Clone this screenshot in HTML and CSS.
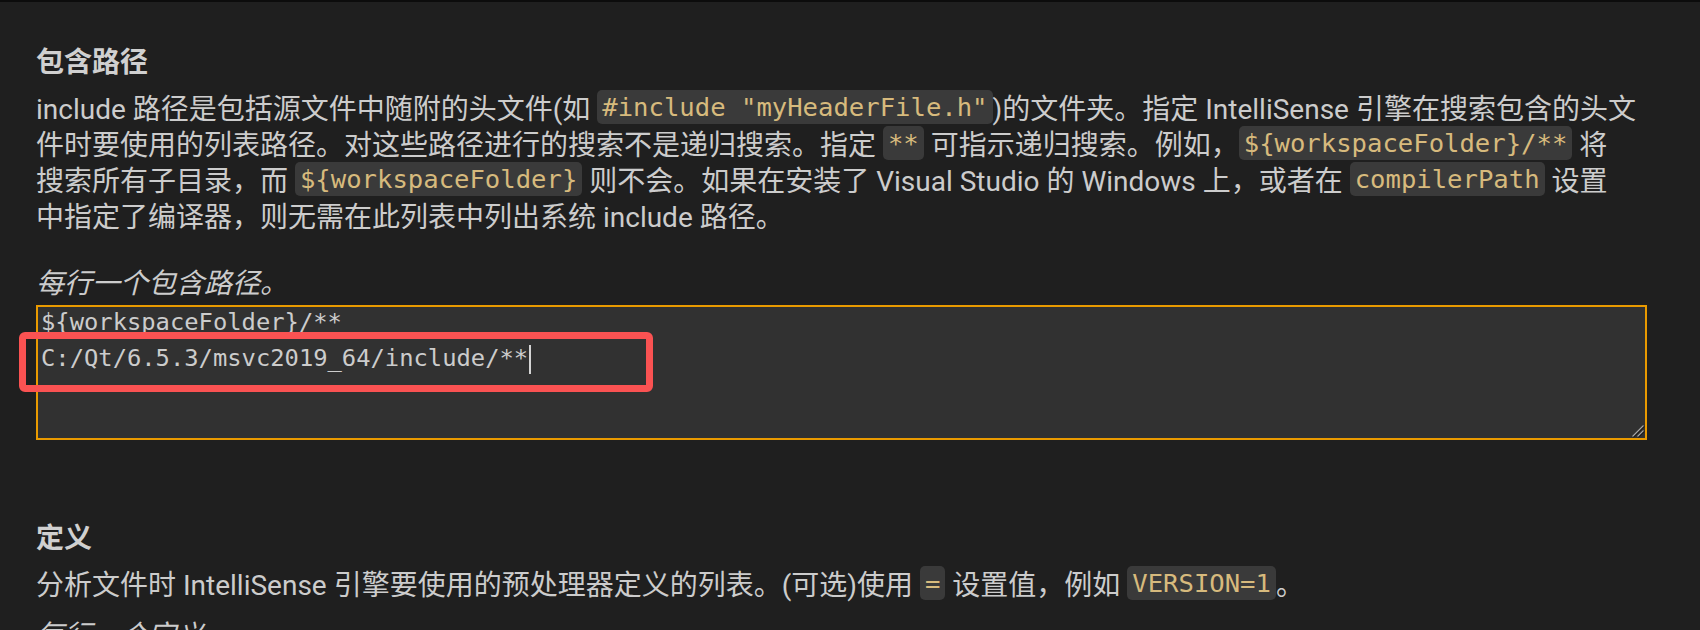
FILE: index.html
```html
<!DOCTYPE html>
<html lang="zh-CN">
<head>
<meta charset="utf-8">
<title>C/C++ 配置</title>
<link rel="stylesheet" href="styles.css">
</head>
<body>
<div class="page">
  <section class="setting setting--first">
    <h2 class="setting-title">包含路径</h2>
    <p class="setting-desc setting-desc--long">include 路径是包括源文件中随附的头文件(如 <code>#include "myHeaderFile.h"</code>)的文件夹。指定 IntelliSense 引擎在搜索包含的头文<br>件时要使用的列表路径。对这些路径进行的搜索不是递归搜索。指定 <code>**</code> 可指示递归搜索。例如，<code>${workspaceFolder}/**</code> 将<br>搜索所有子目录，而 <code>${workspaceFolder}</code> 则不会。如果在安装了 Visual Studio 的 Windows 上，或者在 <code>compilerPath</code> 设置<br>中指定了编译器，则无需在此列表中列出系统 include 路径。</p>
    <p class="setting-hint">每行一个包含路径。</p>
    <div class="editor-wrap">
      <div class="editor">
        <div class="editor-lines">
          <div class="editor-line">${workspaceFolder}/**</div>
          <div class="editor-line">C:/Qt/6.5.3/msvc2019_64/include/**<span class="caret"></span></div>
        </div>
        <svg class="resize-grip" width="14" height="14" viewBox="0 0 14 14">
          <path d="M13 2 L2 13" stroke="#1a1a1a" stroke-width="2.2"/>
          <path d="M13 7 L7 13" stroke="#1a1a1a" stroke-width="2.2"/>
          <path d="M12.5 1.5 L1.5 12.5" stroke="#a8a8a8" stroke-width="1.1"/>
          <path d="M12.5 6.5 L6.5 12.5" stroke="#a8a8a8" stroke-width="1.1"/>
        </svg>
      </div>
      <div class="highlight"></div>
    </div>
  </section>

  <section class="setting setting--second">
    <h2 class="setting-title">定义</h2>
    <p class="setting-desc">分析文件时 IntelliSense 引擎要使用的预处理器定义的列表。(可选)使用 <code>=</code> 设置值，例如 <code>VERSION=1</code>。</p>
    <p class="setting-hint">每行一个定义。</p>
  </section>
</div>
</body>
</html>
```

FILE: styles.css
```css
html, body {
  margin: 0;
  padding: 0;
  height: 630px;
  overflow: hidden;
}

body {
  background: #1f1f1f;
  border-top: 2px solid #0c0c0c;
  color: #cccccc;
  font-family: Roboto, "Noto Sans CJK SC", sans-serif;
  font-size: 28px;
  line-height: 36px;
}

.page {
  padding: 43px 53px 0 36px;
}

.setting {
  display: flex;
  flex-direction: column;
}

.setting--second {
  margin-top: 81px;
}

.setting-title {
  margin: 0;
  font-size: 28px;
  line-height: 36px;
  font-weight: 700;
  color: #d0d0d0;
}

.setting-desc {
  margin: 11px 0 0;
  white-space: nowrap;
}

.setting-desc--long {
  margin-bottom: 16px;
}

.setting-hint {
  margin: 14px 0 0;
  font-style: italic;
}

code {
  font-family: "DejaVu Sans Mono", "Liberation Mono", monospace;
  font-size: 25.6px;
  line-height: 1;
  color: #d7ba7d;
  background: #3a3a3a;
  border-radius: 5px;
  padding: 2px 5px;
  vertical-align: 3px;
}

.editor-wrap {
  position: relative;
  margin-top: 3px;
}

.editor {
  position: relative;
  box-sizing: border-box;
  height: 135px;
  border: 2px solid #e99a00;
  background: #313131;
  overflow: hidden;
}

.editor-lines {
  margin-top: -3px;
  padding-left: 3px;
  font-family: "DejaVu Sans Mono", "Liberation Mono", monospace;
  font-size: 23.8px;
  line-height: 36px;
  color: #cccccc;
}

.editor-line {
  white-space: pre;
}

.caret {
  display: inline-block;
  width: 2px;
  height: 29px;
  margin-left: 1px;
  background: #d4d4d4;
  vertical-align: middle;
}

.resize-grip {
  position: absolute;
  right: 0;
  bottom: 0;
}

.highlight {
  position: absolute;
  left: -17px;
  top: 27px;
  width: 634px;
  height: 60px;
  box-sizing: border-box;
  border: 7px solid #fa5252;
  border-radius: 6px;
}
```
